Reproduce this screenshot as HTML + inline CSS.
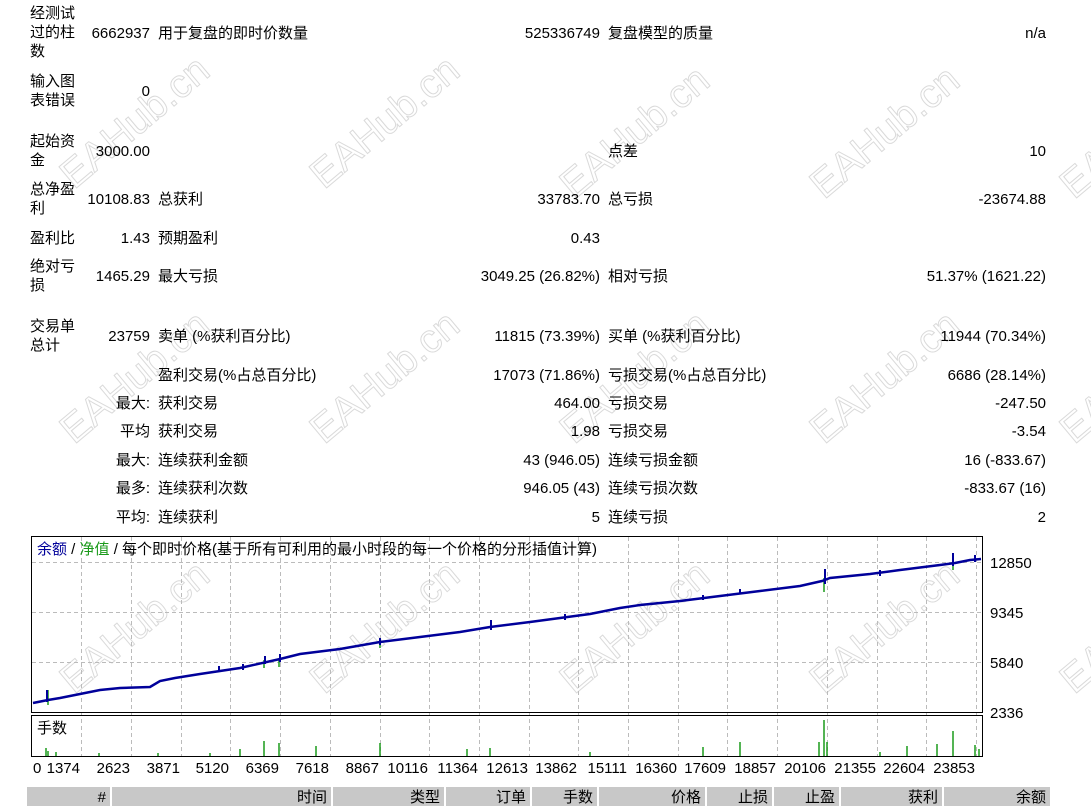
<!DOCTYPE html>
<html><head><meta charset="utf-8"><style>
body{margin:0;width:1091px;height:806px;background:#fff;overflow:hidden;position:relative;font-family:"Liberation Sans","Noto Sans CJK SC",sans-serif;font-size:15px;color:#000}
.t{position:absolute;white-space:nowrap;line-height:19px;z-index:6}
.r{position:absolute;white-space:nowrap;line-height:19px;text-align:right;z-index:6}
.wm{position:absolute;font-family:"Liberation Sans",sans-serif;font-size:40px;color:transparent;-webkit-text-stroke:1px #dadada;transform:rotate(-40deg);white-space:nowrap;z-index:1}
.hd{position:absolute;top:787px;height:19px;background:#c8c8c8;text-align:right;line-height:21px;padding-right:4px;box-sizing:border-box;font-size:15px}
.xl{position:absolute;top:759px;line-height:19px;text-align:right;width:60px;z-index:6}
</style></head><body>
<div class="t" style="left:30px;top:4px;line-height:19px">经测试<br>过的柱<br>数</div>
<div class="r" style="right:941px;top:24px">6662937</div>
<div class="t" style="left:158px;top:24px">用于复盘的即时价数量</div>
<div class="r" style="right:491px;top:24px">525336749</div>
<div class="t" style="left:608px;top:24px">复盘模型的质量</div>
<div class="r" style="right:45px;top:24px">n/a</div>
<div class="t" style="left:30px;top:72px">输入图<br>表错误</div>
<div class="r" style="right:941px;top:82px">0</div>
<div class="t" style="left:30px;top:132px">起始资<br>金</div>
<div class="r" style="right:941px;top:142px">3000.00</div>
<div class="t" style="left:608px;top:142px">点差</div>
<div class="r" style="right:45px;top:142px">10</div>
<div class="t" style="left:30px;top:180px">总净盈<br>利</div>
<div class="r" style="right:941px;top:190px">10108.83</div>
<div class="t" style="left:158px;top:190px">总获利</div>
<div class="r" style="right:491px;top:190px">33783.70</div>
<div class="t" style="left:608px;top:190px">总亏损</div>
<div class="r" style="right:45px;top:190px">-23674.88</div>
<div class="t" style="left:30px;top:229px">盈利比</div>
<div class="r" style="right:941px;top:229px">1.43</div>
<div class="t" style="left:158px;top:229px">预期盈利</div>
<div class="r" style="right:491px;top:229px">0.43</div>
<div class="t" style="left:30px;top:257px">绝对亏<br>损</div>
<div class="r" style="right:941px;top:267px">1465.29</div>
<div class="t" style="left:158px;top:267px">最大亏损</div>
<div class="r" style="right:491px;top:267px">3049.25 (26.82%)</div>
<div class="t" style="left:608px;top:267px">相对亏损</div>
<div class="r" style="right:45px;top:267px">51.37% (1621.22)</div>
<div class="t" style="left:30px;top:317px">交易单<br>总计</div>
<div class="r" style="right:941px;top:327px">23759</div>
<div class="t" style="left:158px;top:327px">卖单 (%获利百分比)</div>
<div class="r" style="right:491px;top:327px">11815 (73.39%)</div>
<div class="t" style="left:608px;top:327px">买单 (%获利百分比)</div>
<div class="r" style="right:45px;top:327px">11944 (70.34%)</div>
<div class="t" style="left:158px;top:366px">盈利交易(%占总百分比)</div>
<div class="r" style="right:491px;top:366px">17073 (71.86%)</div>
<div class="t" style="left:608px;top:366px">亏损交易(%占总百分比)</div>
<div class="r" style="right:45px;top:366px">6686 (28.14%)</div>
<div class="r" style="right:941px;top:394px">最大:</div>
<div class="t" style="left:158px;top:394px">获利交易</div>
<div class="r" style="right:491px;top:394px">464.00</div>
<div class="t" style="left:608px;top:394px">亏损交易</div>
<div class="r" style="right:45px;top:394px">-247.50</div>
<div class="r" style="right:941px;top:422px">平均</div>
<div class="t" style="left:158px;top:422px">获利交易</div>
<div class="r" style="right:491px;top:422px">1.98</div>
<div class="t" style="left:608px;top:422px">亏损交易</div>
<div class="r" style="right:45px;top:422px">-3.54</div>
<div class="r" style="right:941px;top:451px">最大:</div>
<div class="t" style="left:158px;top:451px">连续获利金额</div>
<div class="r" style="right:491px;top:451px">43 (946.05)</div>
<div class="t" style="left:608px;top:451px">连续亏损金额</div>
<div class="r" style="right:45px;top:451px">16 (-833.67)</div>
<div class="r" style="right:941px;top:479px">最多:</div>
<div class="t" style="left:158px;top:479px">连续获利次数</div>
<div class="r" style="right:491px;top:479px">946.05 (43)</div>
<div class="t" style="left:608px;top:479px">连续亏损次数</div>
<div class="r" style="right:45px;top:479px">-833.67 (16)</div>
<div class="r" style="right:941px;top:508px">平均:</div>
<div class="t" style="left:158px;top:508px">连续获利</div>
<div class="r" style="right:491px;top:508px">5</div>
<div class="t" style="left:608px;top:508px">连续亏损</div>
<div class="r" style="right:45px;top:508px">2</div>

<svg style="position:absolute;left:0;top:0;z-index:2" width="1091" height="806">
<g stroke="#bbb" stroke-dasharray="4,3" stroke-width="1">
<line x1="32" x2="982" y1="562.5" y2="562.5"/><line x1="32" x2="982" y1="612.5" y2="612.5"/><line x1="32" x2="982" y1="662.5" y2="662.5"/>
<line x1="81.5" x2="81.5" y1="537" y2="757"/><line x1="131.5" x2="131.5" y1="537" y2="757"/><line x1="181.5" x2="181.5" y1="537" y2="757"/><line x1="230.5" x2="230.5" y1="537" y2="757"/><line x1="280.5" x2="280.5" y1="537" y2="757"/><line x1="330.5" x2="330.5" y1="537" y2="757"/><line x1="380.5" x2="380.5" y1="537" y2="757"/><line x1="429.5" x2="429.5" y1="537" y2="757"/><line x1="479.5" x2="479.5" y1="537" y2="757"/><line x1="529.5" x2="529.5" y1="537" y2="757"/><line x1="578.5" x2="578.5" y1="537" y2="757"/><line x1="628.5" x2="628.5" y1="537" y2="757"/><line x1="678.5" x2="678.5" y1="537" y2="757"/><line x1="727.5" x2="727.5" y1="537" y2="757"/><line x1="777.5" x2="777.5" y1="537" y2="757"/><line x1="827.5" x2="827.5" y1="537" y2="757"/><line x1="877.5" x2="877.5" y1="537" y2="757"/><line x1="926.5" x2="926.5" y1="537" y2="757"/><line x1="976.5" x2="976.5" y1="537" y2="757"/>
</g>
<rect x="31.5" y="536.5" width="951" height="176" fill="none" stroke="#000"/>
<rect x="31.5" y="715.5" width="951" height="41" fill="none" stroke="#000"/>
<g stroke="#1a9a1a" stroke-width="1.5">
<line x1="46" x2="46" y1="756" y2="748"/><line x1="48" x2="48" y1="756" y2="751"/><line x1="56" x2="56" y1="756" y2="752"/><line x1="99" x2="99" y1="756" y2="753"/><line x1="158" x2="158" y1="756" y2="753"/><line x1="210" x2="210" y1="756" y2="753"/><line x1="240" x2="240" y1="756" y2="749"/><line x1="264" x2="264" y1="756" y2="741"/><line x1="279" x2="279" y1="756" y2="743"/><line x1="316" x2="316" y1="756" y2="746"/><line x1="380" x2="380" y1="756" y2="743"/><line x1="467" x2="467" y1="756" y2="749"/><line x1="490" x2="490" y1="756" y2="748"/><line x1="590" x2="590" y1="756" y2="752"/><line x1="703" x2="703" y1="756" y2="747"/><line x1="740" x2="740" y1="756" y2="742"/><line x1="819" x2="819" y1="756" y2="742"/><line x1="824" x2="824" y1="756" y2="720"/><line x1="827" x2="827" y1="756" y2="742"/><line x1="880" x2="880" y1="756" y2="752"/><line x1="907" x2="907" y1="756" y2="746"/><line x1="937" x2="937" y1="756" y2="744"/><line x1="953" x2="953" y1="756" y2="731"/><line x1="975" x2="975" y1="756" y2="745"/><line x1="979" x2="979" y1="756" y2="749"/>
<line x1="48" x2="48" y1="690" y2="705"/><line x1="264" x2="264" y1="660" y2="668"/><line x1="279" x2="279" y1="660" y2="667"/><line x1="380" x2="380" y1="642" y2="648"/><line x1="824" x2="824" y1="578" y2="592"/><line x1="953" x2="953" y1="562" y2="570"/>
</g>
<polyline fill="none" stroke="#00009a" stroke-width="2.5" points="33,703 48,700 60,698 80,694 100,690 120,688 150,687 160,681 175,678 200,674 240,668 280,659 300,654 340,649 380,642 420,637 460,632 490,627 530,622 560,618 590,614 620,608 640,605 680,601 720,596 760,591 800,586 822,581 830,578 870,574 900,570 940,565 955,563 970,560 981,559"/>
<g stroke="#00009a" stroke-width="2">
<line x1="47" x2="47" y1="690" y2="702"/><line x1="219" x2="219" y1="666" y2="672"/><line x1="243" x2="243" y1="664" y2="670"/><line x1="265" x2="265" y1="656" y2="664"/><line x1="280" x2="280" y1="654" y2="662"/><line x1="380" x2="380" y1="638" y2="645"/><line x1="491" x2="491" y1="620" y2="630"/><line x1="565" x2="565" y1="614" y2="620"/><line x1="703" x2="703" y1="595" y2="600"/><line x1="740" x2="740" y1="589" y2="594"/><line x1="825" x2="825" y1="569" y2="584"/><line x1="880" x2="880" y1="570" y2="576"/><line x1="953" x2="953" y1="553" y2="566"/><line x1="975" x2="975" y1="555" y2="562"/>
</g>
</svg>
<div class="t" style="left:37px;top:540px"><span style="color:#00009a">余额</span> / <span style="color:#1a9a1a">净值</span> / 每个即时价格(基于所有可利用的最小时段的每一个价格的分形插值计算)</div>
<div class="t" style="left:990px;top:554px">12850</div>
<div class="t" style="left:990px;top:604px">9345</div>
<div class="t" style="left:990px;top:654px">5840</div>
<div class="t" style="left:990px;top:704px">2336</div>
<div class="t" style="left:37px;top:719px">手数</div>
<div class="t" style="left:33px;top:759px">0</div>
<div class="xl" style="left:20px">1374</div><div class="xl" style="left:70px">2623</div><div class="xl" style="left:120px">3871</div><div class="xl" style="left:169px">5120</div><div class="xl" style="left:219px">6369</div><div class="xl" style="left:269px">7618</div><div class="xl" style="left:319px">8867</div><div class="xl" style="left:368px">10116</div><div class="xl" style="left:418px">11364</div><div class="xl" style="left:468px">12613</div><div class="xl" style="left:517px">13862</div><div class="xl" style="left:567px">15111</div><div class="xl" style="left:617px">16360</div><div class="xl" style="left:666px">17609</div><div class="xl" style="left:716px">18857</div><div class="xl" style="left:766px">20106</div><div class="xl" style="left:816px">21355</div><div class="xl" style="left:865px">22604</div><div class="xl" style="left:915px">23853</div>

<div class="hd" style="left:27px;width:83px">#</div>
<div class="hd" style="left:112px;width:219px">时间</div>
<div class="hd" style="left:333px;width:111px">类型</div>
<div class="hd" style="left:446px;width:84px">订单</div>
<div class="hd" style="left:532px;width:65px">手数</div>
<div class="hd" style="left:599px;width:106px">价格</div>
<div class="hd" style="left:707px;width:65px">止损</div>
<div class="hd" style="left:774px;width:65px">止盈</div>
<div class="hd" style="left:841px;width:101px">获利</div>
<div class="hd" style="left:944px;width:106px">余额</div>

<div class="wm" style="left:45px;top:100px">EAHub.cn</div>
<div class="wm" style="left:295px;top:100px">EAHub.cn</div>
<div class="wm" style="left:545px;top:110px">EAHub.cn</div>
<div class="wm" style="left:795px;top:110px">EAHub.cn</div>
<div class="wm" style="left:1045px;top:110px">EAHub.cn</div>
<div class="wm" style="left:45px;top:355px">EAHub.cn</div>
<div class="wm" style="left:295px;top:355px">EAHub.cn</div>
<div class="wm" style="left:545px;top:355px">EAHub.cn</div>
<div class="wm" style="left:795px;top:355px">EAHub.cn</div>
<div class="wm" style="left:1045px;top:355px">EAHub.cn</div>
<div class="wm" style="left:45px;top:605px">EAHub.cn</div>
<div class="wm" style="left:295px;top:605px">EAHub.cn</div>
<div class="wm" style="left:545px;top:605px">EAHub.cn</div>
<div class="wm" style="left:795px;top:605px">EAHub.cn</div>
<div class="wm" style="left:1045px;top:605px">EAHub.cn</div>
</body></html>
